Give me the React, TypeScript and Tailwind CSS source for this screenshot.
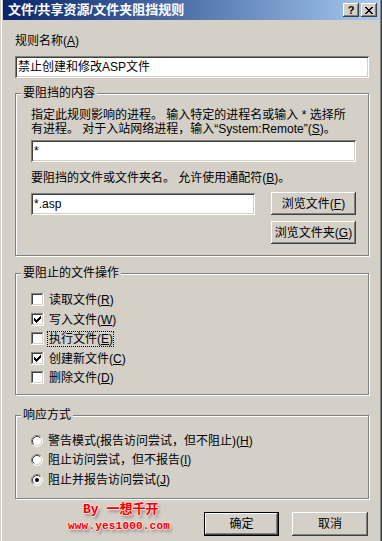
import React from "react";

const raised =
  "shadow-[inset_-1px_-1px_0_#404040,inset_1px_1px_0_#ffffff,inset_-2px_-2px_0_#808080,inset_2px_2px_0_#d4d0c8]";
const sunken =
  "shadow-[inset_1px_1px_0_#808080,inset_-1px_-1px_0_#ffffff,inset_2px_2px_0_#404040,inset_-2px_-2px_0_#d4d0c8]";

function U({ c }: { c: string }) {
  return <span className="underline underline-offset-[1px]">{c}</span>;
}

function Field({ value, className }: { value: string; className: string }) {
  return (
    <div className={`bg-white pl-[3px] flex items-center leading-[14px] ${sunken} ${className}`}>
      {value}
    </div>
  );
}

function Btn({ children, className = "", isDefault = false }: { children: React.ReactNode; className?: string; isDefault?: boolean }) {
  return (
    <div
      className={`flex items-center justify-center leading-[14px] bg-[#d4d0c8] ${
        isDefault ? "border border-black" : ""
      } ${className}`}
    >
      <div className={`w-full h-full flex items-center justify-center ${raised}`}>{children}</div>
    </div>
  );
}

function Group({ title, className, children }: { title: string; className: string; children: React.ReactNode }) {
  return (
    <div className={`relative border border-[#808080] shadow-[inset_1px_1px_0_#ffffff,1px_1px_0_#ffffff] ${className}`}>
      <span className="absolute top-[-8px] left-[5px] px-[2px] bg-[#d4d0c8] leading-[14px]">{title}</span>
      {children}
    </div>
  );
}

function Check({ checked }: { checked: boolean }) {
  const starts = [2, 3, 4, 3, 2, 1, 0];
  return (
    <svg width="13" height="13" viewBox="0 0 13 13" shapeRendering="crispEdges" className="shrink-0">
      <rect x="0" y="0" width="13" height="13" fill="#ffffff" />
      <rect x="0" y="0" width="12" height="1" fill="#808080" />
      <rect x="0" y="0" width="1" height="12" fill="#808080" />
      <rect x="1" y="1" width="10" height="1" fill="#404040" />
      <rect x="1" y="1" width="1" height="10" fill="#404040" />
      <rect x="1" y="11" width="11" height="1" fill="#d4d0c8" />
      <rect x="11" y="1" width="1" height="11" fill="#d4d0c8" />
      {checked &&
        starts.map((s, i) => <rect key={i} x={3 + i} y={3 + s} width="1" height="3" fill="#000000" />)}
    </svg>
  );
}

function Radio({ on }: { on: boolean }) {
  return (
    <svg width="12" height="12" viewBox="0 0 12 12" className="shrink-0">
      <circle cx="6" cy="6" r="5" fill="#ffffff" />
      <path d="M2.11 9.89 A5.5 5.5 0 0 1 9.89 2.11" fill="none" stroke="#808080" strokeWidth="1" />
      <path d="M9.89 2.11 A5.5 5.5 0 0 1 2.11 9.89" fill="none" stroke="#ffffff" strokeWidth="1" />
      <path d="M2.82 9.18 A4.5 4.5 0 0 1 9.18 2.82" fill="none" stroke="#404040" strokeWidth="1" />
      <path d="M9.18 2.82 A4.5 4.5 0 0 1 2.82 9.18" fill="none" stroke="#d4d0c8" strokeWidth="1" />
      {on && <circle cx="6" cy="6" r="2" fill="#000000" />}
    </svg>
  );
}

const checks = [
  { label: "读取文件", key: "R", on: false, mt: "mt-[19px]" },
  { label: "写入文件", key: "W", on: true, mt: "mt-[7px]" },
  { label: "执行文件", key: "E", on: false, mt: "mt-[6px]", focus: true },
  { label: "创建新文件", key: "C", on: true, mt: "mt-[7px]" },
  { label: "删除文件", key: "D", on: false, mt: "mt-[6px]" },
];

const radios = [
  { label: "警告模式(报告访问尝试，但不阻止)", key: "H", on: false, mt: "mt-[19px]" },
  { label: "阻止访问尝试，但不报告", key: "I", on: false, mt: "mt-[7px]" },
  { label: "阻止并报告访问尝试", key: "J", on: true, mt: "mt-[8px]" },
];

export default function App() {
  return (
    <div className="w-[382px] h-[541px] overflow-hidden bg-[#d4d0c8] px-[3px] text-[12px] text-black font-['Liberation_Sans','Noto_Sans_CJK_SC',sans-serif] shadow-[inset_1px_0_0_#d4d0c8,inset_2px_0_0_#ffffff,inset_-1px_0_0_#404040,inset_-2px_0_0_#808080]">
      {/* Title bar */}
      <div className="h-[20px] flex items-center pl-[5px] pr-[2px] bg-gradient-to-r from-[#0a246a] to-[#a6caf0]">
        <span className="flex-1 font-bold text-white text-[13px] leading-[14px]">文件/共享资源/文件夹阻挡规则</span>
        <div className="flex gap-[2px]">
          <div className={`w-[16px] h-[14px] bg-[#d4d0c8] flex items-center justify-center font-bold text-[11px] leading-none ${raised}`}>
            ?
          </div>
          <div className={`w-[16px] h-[14px] bg-[#d4d0c8] flex items-center justify-center ${raised}`}>
            <svg width="8" height="7" viewBox="0 0 8 7" shapeRendering="crispEdges">
              <path d="M0 0h2v1h-2z M6 0h2v1h-2z M1 1h2v1h-2z M5 1h2v1h-2z M2 2h4v1h-4z M3 3h2v1h-2z M2 4h4v1h-4z M1 5h2v1h-2z M5 5h2v1h-2z M0 6h2v1h-2z M6 6h2v1h-2z" fill="#000" />
            </svg>
          </div>
        </div>
      </div>

      <div className="pl-[12px] w-[366px] flex flex-col">
        <div className="mt-[14px] leading-[14px]">
          规则名称(<U c="A" />)
        </div>
        <Field value="禁止创建和修改ASP文件" className="mt-[8px] w-[354px] h-[22px]" />

        <Group title="要阻挡的内容" className="mt-[15px] w-[354px] h-[163px]">
          <div className="pl-[15px] pt-[14px] flex flex-col">
            <div className="leading-[14px]">指定此规则影响的进程。 输入特定的进程名或输入 * 选择所</div>
            <div className="leading-[14px]">
              有进程。 对于入站网络进程，输入“System:Remote”(<U c="S" />)。
            </div>
            <Field value="*" className="mt-[4px] w-[325px] h-[22px]" />
            <div className="mt-[9px] leading-[14px]">
              要阻挡的文件或文件夹名。 允许使用通配符(<U c="B" />)。
            </div>
            <div className="mt-[7px] flex gap-[16px]">
              <Field value="*.asp" className="mt-[1px] w-[224px] h-[22px]" />
              <div className="flex flex-col gap-[6px]">
                <Btn className="w-[85px] h-[23px]">
                  浏览文件(<U c="F" />)
                </Btn>
                <Btn className="w-[85px] h-[23px]">
                  浏览文件夹(<U c="G" />)
                </Btn>
              </div>
            </div>
          </div>
        </Group>

        <Group title="要阻止的文件操作" className="mt-[17px] w-[354px] h-[122px]">
          <div className="pl-[15px] flex flex-col">
            {checks.map((c) => (
              <div key={c.key} className={`flex items-center gap-[4px] h-[13px] ${c.mt}`}>
                <Check checked={c.on} />
                <span className={`leading-[14px] pl-[1px] ${c.focus ? "outline outline-1 outline-dotted outline-black" : ""}`}>
                  {c.label}(<U c={c.key} />)
                </span>
              </div>
            ))}
          </div>
        </Group>

        <Group title="响应方式" className="mt-[20px] w-[354px] h-[84px]">
          <div className="pl-[15px] flex flex-col">
            {radios.map((r) => (
              <div key={r.key} className={`flex items-center gap-[5px] h-[12px] ${r.mt}`}>
                <Radio on={r.on} />
                <span className="leading-[14px]">
                  {r.label}(<U c={r.key} />)
                </span>
              </div>
            ))}
          </div>
        </Group>

        <div className="flex w-[354px]">
          <div className="ml-[53px] pt-[3px] flex flex-col font-bold text-[#f00000] [text-shadow:1px_0_0_#fdd,-1px_0_0_#fdd,0_1px_0_#fdd,0_-1px_0_#fdd,2px_3px_3px_#888]">
            <div className="pl-[15px] text-[13px] leading-[16px] font-['Liberation_Mono','Noto_Sans_CJK_SC',monospace]">By 一想千开</div>
            <div className="mt-[1px] text-[11px] leading-[14px] tracking-[0.2px] font-['Liberation_Mono',monospace]">www.yes1000.com</div>
          </div>
          <div className="ml-auto mr-[1px] pt-[13px] flex gap-[13px]">
            <Btn isDefault className="w-[75px] h-[24px]">
              确定
            </Btn>
            <Btn className="w-[76px] h-[24px]">取消</Btn>
          </div>
        </div>
      </div>
    </div>
  );
}
